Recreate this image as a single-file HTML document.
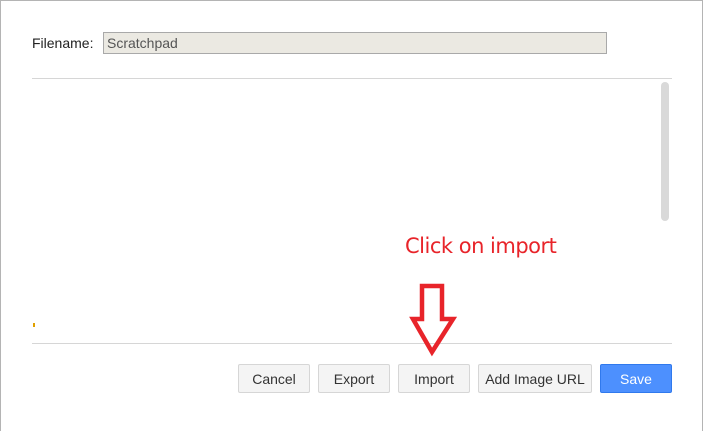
<!DOCTYPE html><html><head><style>
body{margin:0;width:703px;height:426px;position:relative;background:#fff;font-family:"Liberation Sans",Arial,sans-serif;overflow:hidden}
.frame{position:absolute;left:0;top:0;width:701px;height:430px;border:1px solid #b4b4b4;border-bottom:none}
.lbl{position:absolute;left:32px;top:35px;font-size:14px;color:#222}
.inp{position:absolute;left:103px;top:32px;border:1px solid #a9a9a9;background:#ebe9e2;font-size:14px;color:#555;line-height:20px;padding-left:3px;box-sizing:border-box;width:504px;height:22px}
.hr{position:absolute;left:32px;width:640px;height:1px;background:#d6d6d6}
.sb{position:absolute;left:661px;top:82px;width:8px;height:139px;border-radius:4px;background:#d9d9d9}
.btn{position:absolute;top:364px;height:29px;border:1px solid #d6d6d6;border-radius:2px;background:#f4f4f4;font-size:14px;color:#333;text-align:center;line-height:28px;box-sizing:border-box}
.save{background:#4d90fe;border-color:#3079ed;color:#fff}
.note{position:absolute;left:405px;top:234px;font-size:21px;color:#e8242a;font-family:"DejaVu Sans",sans-serif;letter-spacing:-0.5px}
</style></head><body>
<div class="frame"></div>
<div class="lbl">Filename:</div>
<div class="inp">Scratchpad</div>
<div class="hr" style="top:78px"></div>
<div class="sb"></div>
<div style="position:absolute;left:33px;top:323px;width:2px;height:4px;background:#e0a000"></div>
<div class="hr" style="top:343px"></div>
<div class="note">Click on import</div>
<svg style="position:absolute;left:0;top:0" width="703" height="426"><path d="M422 286H442V319H453L432 352L413 319H422Z" fill="none" stroke="#e8242a" stroke-width="4.5" stroke-linejoin="miter"/></svg>
<div class="btn" style="left:238px;width:72px">Cancel</div>
<div class="btn" style="left:318px;width:72px">Export</div>
<div class="btn" style="left:398px;width:72px">Import</div>
<div class="btn" style="left:478px;width:114px">Add Image URL</div>
<div class="btn save" style="left:600px;width:72px">Save</div>
</body></html>
